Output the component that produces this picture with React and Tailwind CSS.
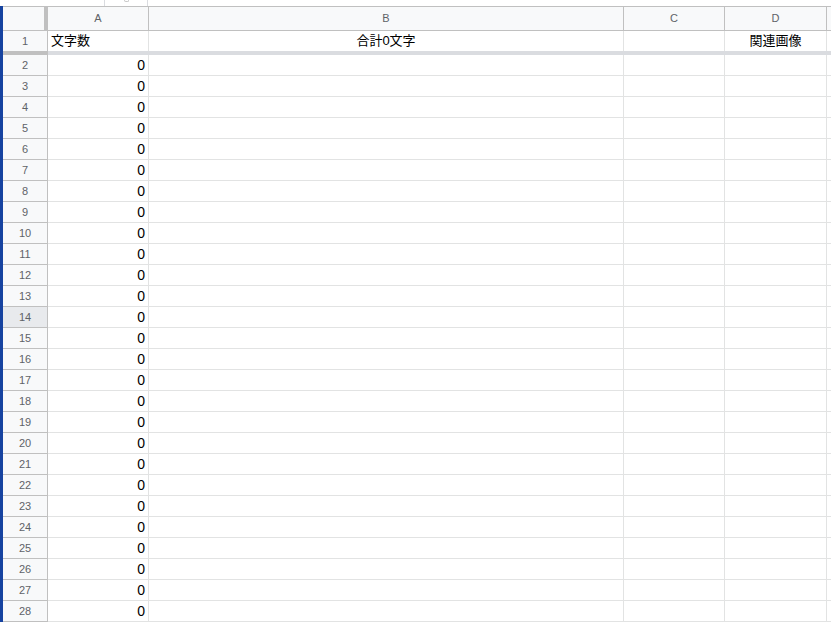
import React from 'react';

const cols = [
    { key: 'A', w: 'w-[101px]' },
    { key: 'B', w: 'w-[475px]' },
    { key: 'C', w: 'w-[101px]' },
    { key: 'D', w: 'w-[102px]' },
];

const rows = Array.from({ length: 27 }, (_, i) => i + 2);

const font = { fontFamily: '"Liberation Sans", Arial, "Noto Sans CJK JP", sans-serif' };

export default function App() {
    return (
        <div className="w-[831px] h-[623px] overflow-hidden bg-white" style={font}>
            {/* leftover of the toolbar above */}
            <div className="h-[6px] flex">
                <div className="w-[105px] border-r border-[#dadce0]"></div>
                <div className="w-[43px] border-r border-[#dadce0] flex justify-center">
                    <div className="w-[5px] h-[2px] border-b border-x border-[#c8c8c8] rounded-b-sm mt-0"></div>
                </div>
            </div>

            <div className="border-l-[3px] border-[#1643a0]">
                {/* column header */}
                <div className="flex h-[25px] bg-[#f8f9fa] border-y border-[#c0c0c0] text-[11px] text-[#5f6368]">
                    <div className="w-[45px] shrink-0 border-r-[4px] border-[#c0c0c0]"></div>
                    {cols.map((c) => (
                        <div key={c.key} className={`${c.w} shrink-0 border-r border-[#c0c0c0] flex items-center justify-center`}>
                            {c.key}
                        </div>
                    ))}
                    <div className="flex-1"></div>
                </div>

                {/* row 1 (frozen) */}
                <div className="flex h-[24px] border-b-[4px] border-[#dadce0] text-[13px] text-black">
                    <div className="w-[45px] shrink-0 bg-[#f8f9fa] border-r border-[#c0c0c0] flex items-center justify-center text-[11px] text-[#5f6368] relative">
                        1
                        <div className="absolute left-0 right-[-1px] bottom-[-4px] h-[4px] bg-[#c0c0c0]"></div>
                    </div>
                    <div className="w-[101px] shrink-0 border-r border-[#e2e3e3] flex items-center px-[3px]">文字数</div>
                    <div className="w-[475px] shrink-0 border-r border-[#e2e3e3] flex items-center justify-center">合計0文字</div>
                    <div className="w-[101px] shrink-0 border-r border-[#e2e3e3]"></div>
                    <div className="w-[102px] shrink-0 border-r border-[#e2e3e3] flex items-center justify-center">関連画像</div>
                    <div className="flex-1"></div>
                </div>

                {rows.map((n) => (
                    <div key={n} className="flex h-[21px] border-b border-[#e2e3e3] text-[13px] text-black">
                        <div
                            className={`w-[45px] shrink-0 border-r border-[#c0c0c0] border-b border-b-[#c0c0c0] -mb-px flex items-center justify-center text-[11px] text-[#5f6368] ${n === 14 ? 'bg-[#e8eaed]' : 'bg-[#f8f9fa]'}`}
                        >
                            {n}
                        </div>
                        <div className="w-[101px] shrink-0 border-r border-[#e2e3e3] flex items-center justify-end px-[3px] text-[14px]">0</div>
                        <div className="w-[475px] shrink-0 border-r border-[#e2e3e3]"></div>
                        <div className="w-[101px] shrink-0 border-r border-[#e2e3e3]"></div>
                        <div className="w-[102px] shrink-0 border-r border-[#e2e3e3]"></div>
                        <div className="flex-1"></div>
                    </div>
                ))}
            </div>
        </div>
    );
}
